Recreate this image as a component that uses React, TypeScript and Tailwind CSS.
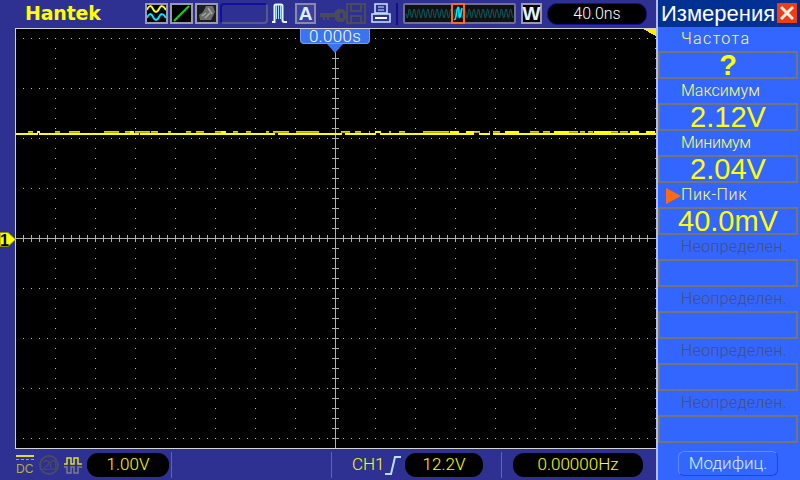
const seg: [number, number, number][] = [
  [28,33,0],[37,40,1],[55,60,0],[69,80,0],[104,119,0],[125,130,0],[130,134,1],[135,139,0],[139,150,0],[151,158,0],[168,171,0],[186,191,0],[196,204,0],[215,221,0],[221,226,1],
  [233,238,0],[246,251,0],[266,269,0],[273,289,0],[296,310,0],[310,319,0],[341,350,0],[355,361,0],[369,370,0],[375,381,1],[389,391,0],[399,405,0],[423,430,0],[430,445,0],
  [445,449,0],[450,459,1],[466,474,1],[474,480,0],[489,490,0],[493,500,0],[505,519,1],[530,539,0],[543,550,0],[554,569,1],[569,578,0],[580,585,0],[588,593,0],[594,600,1],[600,611,1],[611,618,0],[620,628,0],[630,639,1],[646,655,1],
];
const gaps: [number, number][] = [[38,39],[139,140],[275,278],[342,345],[376,380],[474,479],[490,493]];

function dots() {
  let d = "";
  for (let k = 0; k < 9; k++) {
    const y = 38 + 50 * k;
    for (let x = 23; x <= 647; x += 8) d += `M${x} ${y}h1v1h-1z`;
  }
  for (let c = 1; c <= 16; c++) {
    const x = 15 + 40 * c;
    for (let y = 38; y <= 438; y += 10) d += `M${x} ${y}h1v1h-1z`;
  }
  return d;
}
function axes() {
  let d = "M16 238h639v1H16zM335 29h1v419h-1z";
  for (let x = 23; x <= 647; x += 8) d += `M${x} 235h1v7h-1z`;
  for (let y = 38; y <= 438; y += 10) d += `M332 ${y}h7v1h-7z`;
  return d;
}
function sine(x0: number, x1: number, per: number, amp: number, cy: number) {
  let d = "";
  for (let x = x0; x <= x1; x += 0.5) {
    const y = cy + amp * Math.sin(((x - x0) / per) * Math.PI * 2);
    d += `${d ? "L" : "M"}${x} ${y.toFixed(1)}`;
  }
  return d;
}

function Scope() {
  return (
    <div className="relative ml-[15px] h-[421px] w-[641px] border-y border-l border-[#d4d4d4] bg-black">
      <svg width="640" height="419" viewBox="16 29 640 419" className="block" shapeRendering="crispEdges">
        <path d={dots()} fill="#c4c4c4" />
        <path d={axes()} fill="#b0b0b0" />
        <rect x="16" y="133" width="640" height="2" fill="#ffff00" />
        {gaps.map(([a, b]) => (
          <rect key={a} x={a} y="133" width={b - a} height="2" fill="#000" />
        ))}
        {seg.map(([a, b, br]) => (
          <g key={a}>
            <rect x={a} y="131" width={b - a} height="1" fill={br ? "#ffff00" : "#d8d800"} />
            <rect x={a} y="132" width={b - a} height="1" fill={br ? "#ffff00" : "#a8a800"} />
          </g>
        ))}
        <polygon points="643,29 656,29 656,36" fill="#ffee00" />
      </svg>
      <div className="absolute left-[284px] top-0 flex h-[15px] w-[70px] items-center justify-center rounded-b-[4px] border-x border-b border-[#6f9cff] bg-[#3b74ee] font-['Roboto',sans-serif] text-[17px] font-light leading-none tracking-[0.3px] text-white">
        0.000s
      </div>
      <svg width="16" height="9" viewBox="0 0 16 9" className="absolute left-[311px] top-[15px]">
        <polygon points="0,0 16,0 8,9" fill="#3b74ee" />
      </svg>
      <svg width="16" height="16" viewBox="0 0 16 16" className="absolute left-[-16px] top-[203px]">
        <polygon points="0,0.5 8,0.5 15.5,7.5 8,14.5 0,14.5" fill="#ffff00" stroke="#8c8c00" />
        <text x="0" y="13.5" fontFamily="Liberation Sans, sans-serif" fontWeight="700" fontSize="16" fill="#000">1</text>
      </svg>
    </div>
  );
}

function TopBar() {
  const box = "h-[21px] w-[23px] border-2 border-[#9a9aa8] bg-black";
  return (
    <div className="flex h-[28px] items-start pl-[25px] pt-[3px]">
      <div className="w-[120px] font-['DejaVu_Sans',sans-serif] text-[19px] font-bold leading-[20px] tracking-[-0.2px] text-[#ffff00]">
        Hantek
      </div>
      <div className={box}>
        <svg width="19" height="17" viewBox="0 0 19 17">
          <path d="M0 5C2 0 4 0 6 4S10 8 12 4 16 0 19 5" fill="none" stroke="#ffff00" strokeWidth="2" />
          <path d="M0 13C2 8 4 8 6 12S10 16 12 12 16 8 19 13" fill="none" stroke="#00e8ff" strokeWidth="2" />
        </svg>
      </div>
      <div className={`${box} ml-[2px]`}>
        <svg width="19" height="17" viewBox="0 0 19 17">
          <path d="M2 16L17 1" stroke="#00e000" strokeWidth="2.2" />
        </svg>
      </div>
      <div className="ml-[2px] h-[21px] w-[23px] border-2 border-[#9a9aa8] bg-[#1c1c1c]">
        <svg width="19" height="17" viewBox="0 0 19 17">
          <path d="M2 10L6 7L9 1H16L18 7L14 15H3Z" fill="#6c6c6c" />
          <path d="M5 11L9 8M11 3L15 9M8 13L13 8" stroke="#a8a8a8" strokeWidth="1.5" />
        </svg>
      </div>
      <div className="ml-[2px] h-[21px] w-[48px] rounded-[4px] border-2 border-b-[#555a8a] border-l-[#10109a] border-r-[#555a8a] border-t-[#10109a] bg-[#2e3192]" />
      <svg width="17" height="21" viewBox="0 0 17 21" className="ml-[3px]" fill="none">
        <path d="M1 19H3.5V3Q3.5 1.5 5 1.5H10Q11.5 1.5 11.5 3V17Q11.5 19 13 19H16" stroke="#e8f6ff" strokeWidth="2" />
        <path d="M5.5 2V16M7.5 2V16M9.5 2V16" stroke="#a8dcff" strokeWidth="1" />
      </svg>
      <div className="ml-[7px] flex h-[21px] w-[21px] items-center justify-center border-2 border-[#8a8aa6] bg-[#3c3fa4] font-['Liberation_Sans',sans-serif] text-[19px] font-bold leading-none text-[#d8f0ff]">
        A
      </div>
      <svg width="26" height="13" viewBox="0 0 26 13" className="ml-[4px] mt-[6px]">
        <path d="M0 4H15V2L18 0H22Q26 0 26 6.5T22 13H18L15 11V8H9V11H7V8H5V11H3V8H0Z" fill="#4a4a58" />
        <rect x="20" y="4" width="3" height="5" fill="#2e3192" />
      </svg>
      <svg width="20" height="21" viewBox="0 0 20 21" fill="none">
        <path d="M1 1H19V20H1Z" stroke="#4a4a58" strokeWidth="2" />
        <path d="M5 1V8H15V1M5 20V13H15V20" stroke="#4a4a58" strokeWidth="2" />
      </svg>
      <svg width="20" height="21" viewBox="0 0 20 21" className="ml-[5px]" fill="none">
        <path d="M4 1H16V10H4Z" stroke="#c8e6ff" strokeWidth="1.5" />
        <path d="M7 4H13M7 7H13" stroke="#c8e6ff" />
        <path d="M1 11H19V19H1Z" stroke="#c8e6ff" strokeWidth="1.5" />
        <path d="M4 15H16" stroke="#ffffff" strokeWidth="2" />
      </svg>
      <div className="ml-[5px] h-[22px] w-[2px] bg-[#101080]" />
      <div className="relative ml-[5px] h-[21px] w-[113px] rounded-[2px] border-2 border-[#70708a] bg-[#111]">
        <svg width="109" height="17" viewBox="0 0 109 17" className="block" fill="none">
          <path d={sine(1, 108, 4.6, 4.5, 8.5)} stroke="#0b5c60" strokeWidth="1" />
        </svg>
        <div className="absolute left-[46px] top-[-2px] h-[21px] w-[14px] border-2 border-[#ff6a1a]">
          <svg width="10" height="17" viewBox="0 0 10 17" fill="none">
            <path d="M1 14C3 16 3 9 4 5S6 1 6 8 7 14 9 3" stroke="#00e8ff" strokeWidth="1.6" />
          </svg>
        </div>
      </div>
      <div className="ml-[5px] flex h-[21px] w-[21px] items-center justify-center border-2 border-[#9a9aa8] bg-black font-['Liberation_Sans',sans-serif] text-[19px] font-bold leading-none text-[#e4f4ff]">
        W
      </div>
      <div className="ml-[5px] flex h-[22px] w-[100px] items-center justify-center rounded-[10px] border border-[#10109a] bg-black font-['Roboto',sans-serif] text-[16px] font-light leading-none text-white">
        40.0ns
      </div>
    </div>
  );
}

function Pill({ w, ml, t }: { w: string; ml: string; t: string }) {
  return (
    <div className={`${w} ${ml} flex h-[24px] items-center justify-center rounded-[11px] bg-black font-['Roboto',sans-serif] text-[17px] font-light leading-none text-[#ffff00]`}>
      {t}
    </div>
  );
}

function BottomBar() {
  const sep = "h-[26px] w-[1px] bg-[#3a6cf0]";
  return (
    <div className="flex h-[31px] items-center pl-[16px] font-['Liberation_Sans',sans-serif]">
      <div className="flex h-[20px] w-[18px] flex-col">
        <div className="h-[2px] bg-[#e0e020]" />
        <div className="mt-[2px] h-[1px] border-t border-dashed border-[#b0b040]" />
        <div className="mt-[3px] text-[12px] leading-[12px] text-[#b0b040]">DC</div>
      </div>
      <div className="ml-[5px] flex h-[20px] w-[20px] items-center justify-center rounded-full border-2 border-[#4a4a60] text-[14px] leading-none tracking-[-1px] text-[#4a4a60]">
        20
      </div>
      <svg width="18" height="18" viewBox="0 0 18 18" fill="none" className="ml-[5px]">
        <path d="M0 8H3V2H7V8H10V2H14V8H18" stroke="#e0e020" strokeWidth="1.5" />
        <path d="M0 11H3V17H7V11H10V17H14V11H18" stroke="#7a7a90" strokeWidth="1.5" />
      </svg>
      <Pill w="w-[82px]" ml="ml-[5px]" t="1.00V" />
      <div className={`${sep} ml-[2px]`} />
      <div className={`${sep} ml-[159px]`} />
      <div className="ml-[20px] w-[32px] font-['Roboto',sans-serif] text-[17px] font-light leading-none text-[#ffff00]">CH1</div>
      <svg width="18" height="20" viewBox="0 0 18 20" fill="none">
        <path d="M1 19H7L11 2H17" stroke="#b8e0ff" strokeWidth="2" />
      </svg>
      <Pill w="w-[78px]" ml="ml-[3px]" t="12.2V" />
      <div className={`${sep} ml-[18px]`} />
      <Pill w="w-[130px]" ml="ml-[11px]" t="0.00000Hz" />
    </div>
  );
}

function Meas({ label, value, active, dim, q, track }: { label: string; value?: string; active?: boolean; dim?: boolean; q?: boolean; track?: string }) {
  return (
    <div className="flex flex-col">
      <div className={`relative flex h-[24px] items-center pl-[23px] font-['Roboto',sans-serif] text-[16px] font-light leading-none ${track ?? ""} ${dim ? "text-[#4e5068]" : "text-[#ffff66]"}`}>
        {active && (
          <svg width="15" height="16" viewBox="0 0 15 16" className="absolute left-[8px] top-[5px]">
            <polygon points="0,0 15,8 0,16" fill="#ff6a10" />
          </svg>
        )}
        {label}
      </div>
      <div className={`mr-[2px] flex h-[28px] items-center justify-center border-2 border-[#757575] text-[29px] leading-none text-[#ffff00] ${q ? "font-bold" : ""}`}>
        {value}
      </div>
    </div>
  );
}

function Panel() {
  return (
    <div className="flex h-[480px] w-[144px] flex-col border-l-2 border-[#b4bcec] bg-[#3366ff] font-['Liberation_Sans',sans-serif]">
      <div className="flex h-[27px] items-start bg-[#003092] pl-[3px]">
        <div className="w-[116px] text-[22px] leading-[27px] text-white">Измерения</div>
        <div className="mt-[3px] flex h-[20px] w-[20px] items-center justify-center bg-[#f03c10]">
          <svg width="14" height="14" viewBox="0 0 14 14">
            <path d="M1 1L13 13M13 1L1 13" stroke="#fff0e8" strokeWidth="3" />
          </svg>
        </div>
      </div>
      <Meas label="Частота" value="?" q track="tracking-[1.4px]" />
      <Meas label="Максимум" value="2.12V" track="tracking-[0px]" />
      <Meas label="Минимум" value="2.04V" track="tracking-[-0.3px]" />
      <Meas label="Пик-Пик" value="40.0mV" active track="tracking-[0.6px]" />
      <Meas label="Неопределен." dim track="tracking-[0.3px]" />
      <Meas label="Неопределен." dim track="tracking-[0.3px]" />
      <Meas label="Неопределен." dim track="tracking-[0.3px]" />
      <Meas label="Неопределен." dim track="tracking-[0.3px]" />
      <div className="mt-[8px] ml-[20px] flex h-[25px] w-[100px] items-center justify-center rounded-[6px] border border-[#5f8cff] border-b-[#1f48c8] border-r-[#1f48c8] font-['Roboto',sans-serif] text-[17px] font-light leading-none text-[#d8f0ff]">
        Модифиц.
      </div>
    </div>
  );
}

export default function App() {
  return (
    <div className="flex h-[480px] w-[800px] overflow-hidden bg-[#2e3192]">
      <div className="flex w-[656px] flex-col">
        <TopBar />
        <Scope />
        <BottomBar />
      </div>
      <Panel />
    </div>
  );
}
